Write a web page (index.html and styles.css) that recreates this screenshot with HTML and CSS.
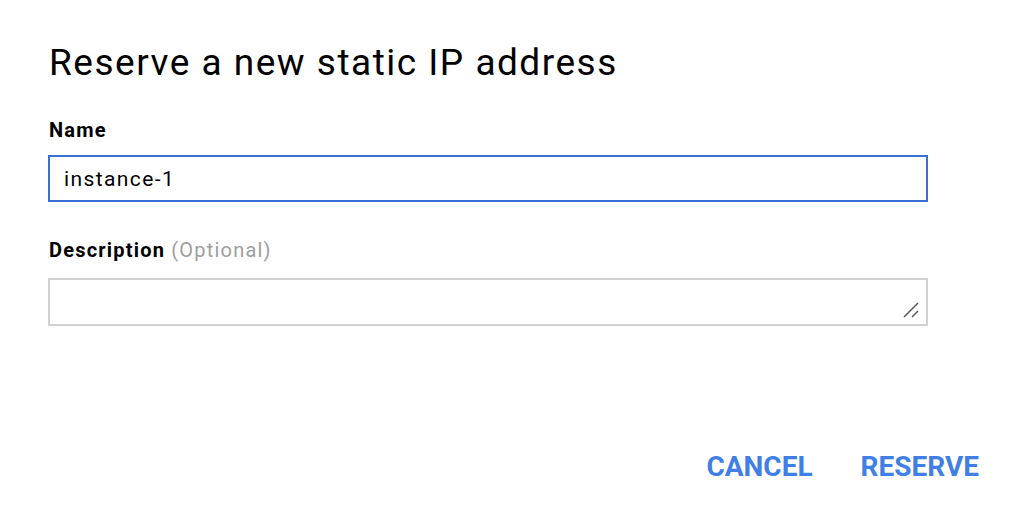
FILE: index.html
```html
<!DOCTYPE html>
<html>
<head>
<meta charset="utf-8">
<link rel="stylesheet" href="styles.css">
</head>
<body>
<div class="dialog">
  <h1 class="title">Reserve a new static IP address</h1>
  <div class="field">
    <label class="label" for="name">Name</label>
    <input class="input input-focus" id="name" type="text" value="instance-1">
  </div>
  <div class="field field-desc">
    <label class="label" for="desc">Description <span class="optional">(Optional)</span></label>
    <div class="textarea-wrap">
      <textarea class="input textarea" id="desc"></textarea>
      <svg class="grip" width="20" height="20" viewBox="0 0 20 20">
        <line x1="1" y1="15" x2="15" y2="1" stroke="#555" stroke-width="1.4"/>
        <line x1="9" y1="15" x2="15" y2="9" stroke="#555" stroke-width="1.4"/>
      </svg>
    </div>
  </div>
  <div class="actions">
    <button class="btn">CANCEL</button>
    <button class="btn">RESERVE</button>
  </div>
</div>
</body>
</html>
```

FILE: styles.css
```css
html, body {
  margin: 0;
  padding: 0;
  background: #fff;
}
body {
  font-family: Roboto, "Liberation Sans", sans-serif;
  color: #000;
  width: 1020px;
  height: 514px;
  overflow: hidden;
}
.dialog {
  padding: 40px 41px 0 48px;
  display: flex;
  flex-direction: column;
}
.title {
  margin: 0 0 32px 1px;
  font-size: 37px;
  font-weight: 400;
  letter-spacing: 1.5px;
  line-height: 46px;
  color: #000;
}
.field {
  display: flex;
  flex-direction: column;
  width: 880px;
}
.field-desc {
  margin-top: 36px;
}
.label {
  font-size: 20px;
  font-weight: 700;
  letter-spacing: 1.2px;
  line-height: 24px;
  margin: 0 0 13px 1px;
  color: #000;
}
.field-desc .label {
  margin-bottom: 16px;
}
.optional {
  font-weight: 400;
  color: #9e9e9e;
}
.input {
  box-sizing: border-box;
  width: 880px;
  height: 47px;
  margin: 0;
  border: 2px solid #d0d0d0;
  border-radius: 0;
  padding: 0 14px;
  font-family: Roboto, "Liberation Sans", sans-serif;
  font-size: 21px;
  letter-spacing: 1.4px;
  color: #000;
  outline: none;
  background: #fff;
}
.input-focus {
  border-color: #3b6fd4;
}
.textarea-wrap {
  position: relative;
  width: 880px;
  height: 48px;
}
.textarea {
  height: 48px;
  resize: none;
  display: block;
}
.grip {
  position: absolute;
  right: 5px;
  bottom: 4px;
}
.actions {
  display: flex;
  justify-content: flex-end;
  gap: 48px;
  margin-top: 125px;
}
.btn {
  background: none;
  border: none;
  padding: 0;
  font-family: Roboto, "Liberation Sans", sans-serif;
  font-size: 28px;
  font-weight: 700;
  color: #3f7fe6;
  line-height: 32px;
}
```
